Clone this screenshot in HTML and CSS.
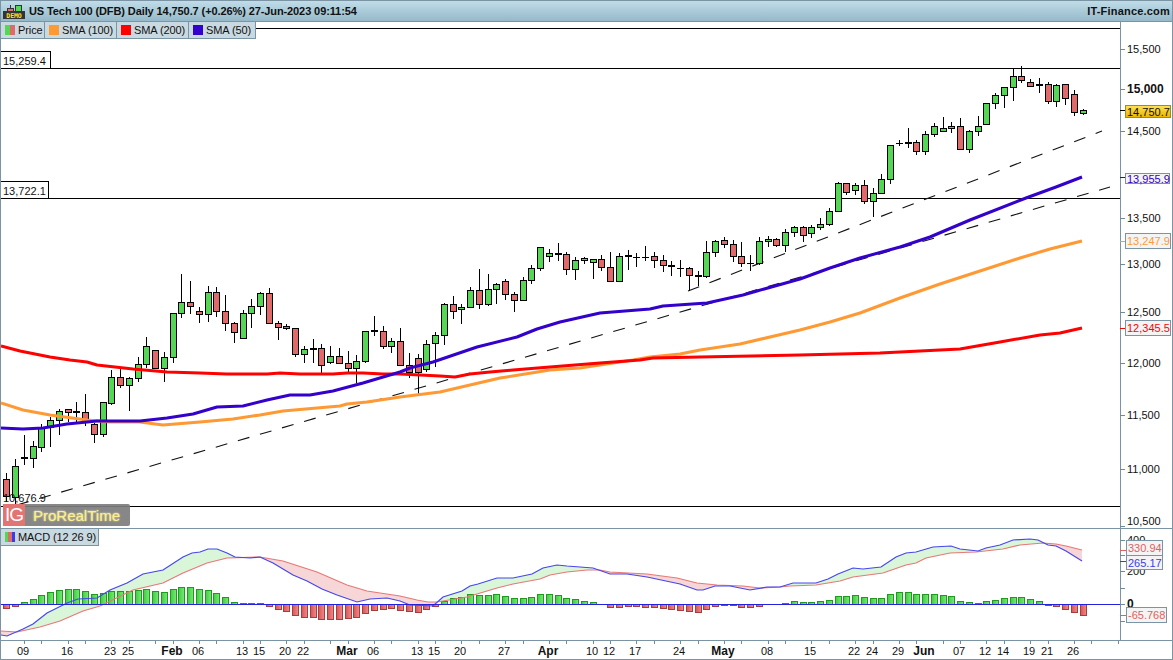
FILE: index.html
```html
<!DOCTYPE html>
<html lang="en">
<head>
  <meta charset="UTF-8">
  <title>US Tech 100 (DFB) Daily</title>
  <link rel="stylesheet" href="styles.css">
</head>
<body>
  <div class="frame">

    <!-- title bar -->
    <header class="topbar">
      <div class="title">
        <svg class="demo-icon" width="24" height="16" viewBox="0 0 24 16">
          <line x1="7.5" y1="2" x2="7.5" y2="9" stroke="#333"/>
          <rect x="4.5" y="5.5" width="6" height="3" fill="#e06a6a" stroke="#333"/>
          <rect x="12.5" y="2.5" width="6" height="6" fill="#55d655" stroke="#333"/>
          <rect x="0" y="8" width="22" height="8" fill="#333"/>
          <text class="demo-text" x="11" y="15" text-anchor="middle">DEMO</text>
        </svg>
        <span>US Tech 100 (DFB) Daily 14,750.7 (+0.26%) 27-Jun-2023 09:11:54</span>
      </div>
      <div class="brand">IT-Finance.com</div>
    </header>

    <!-- main price chart -->
    <section class="price-pane">
      <svg id="priceChart" width="1171" height="506" viewBox="1 22 1171 506"></svg>
      <div class="legend">
        <div class="tab tab-price"><i class="swatch swatch-price"></i>Price</div>
        <div class="tab tab-sma"><i class="swatch swatch-orange"></i>SMA (100)</div>
        <div class="tab tab-sma"><i class="swatch swatch-red"></i>SMA (200)</div>
        <div class="tab tab-sma50"><i class="swatch swatch-blue"></i>SMA (50)</div>
      </div>
      <div class="level level-high">15,259.4</div>
      <div class="level level-mid">13,722.1</div>
      <div class="level-low">10,676.9</div>
      <div class="logo">
        <div class="logo-ig">IG</div>
        <div class="logo-name">ProRealTime</div>
      </div>
    </section>

    <!-- MACD -->
    <section class="macd-pane">
      <svg id="macdChart" width="1171" height="111" viewBox="1 529 1171 111"></svg>
      <div class="legend">
        <div class="tab tab-macd"><i class="swatch swatch-macd"></i>MACD (12 26 9)</div>
      </div>
    </section>

    <div class="date-axis">
      <svg id="dateAxis" width="1171" height="18" viewBox="1 641 1171 18"></svg>
    </div>
  </div>

  <script src="chart.js"></script>
</body>
</html>
```

FILE: styles.css
```css
* {
  box-sizing: border-box;
}

body {
  margin: 0;
  background: #fff;
  font-family: "Liberation Sans", Arial, sans-serif;
  font-size: 11px;
  color: #111;
  overflow: hidden;
}

svg {
  display: block;
}

.frame {
  width: 1173px;
  height: 660px;
  border: 1px solid #7b94a3;
  display: flex;
  flex-direction: column;
}

/* title bar */
.topbar {
  height: 21px;
  flex: none;
  display: flex;
  justify-content: space-between;
  align-items: center;
  padding: 0 2px 0 2px;
  background: linear-gradient(to bottom, #c0dce8, #95b9ca);
  border-bottom: 1px solid #7b94a3;
  font-size: 11px;
  font-weight: bold;
  color: #111;
}

.title {
  display: flex;
  align-items: center;
  gap: 2px;
  letter-spacing: -0.1px;
}

.brand {
  letter-spacing: 0.2px;
}

.demo-icon {
  margin-top: -1px;
}

.demo-text {
  font-family: "DejaVu Sans Mono", monospace;
  font-size: 6.5px;
  font-weight: bold;
  fill: #ffe020;
}

/* panes */
.price-pane {
  position: relative;
  height: 507px;
  flex: none;
  border-bottom: 1px solid #7b94a3;
}

.macd-pane {
  position: relative;
  height: 112px;
  flex: none;
  border-bottom: 1px solid #7b94a3;
}

.date-axis {
  flex: 1;
}

/* svg text */
.axis-text {
  font-family: "Liberation Sans", Arial, sans-serif;
  font-size: 11px;
}

.axis-bold {
  font-family: "Liberation Sans", Arial, sans-serif;
  font-size: 12px;
  font-weight: bold;
}

/* legend tabs */
.legend {
  position: absolute;
  top: 0;
  left: 0;
  display: flex;
}

.tab {
  height: 17px;
  display: flex;
  align-items: center;
  gap: 3px;
  padding-left: 4px;
  background: #c9d9e1;
  border-right: 1px solid #7b94a3;
  border-bottom: 1px solid #7b94a3;
  letter-spacing: -0.1px;
  white-space: nowrap;
}

.tab-price {
  width: 44px;
}

.tab-sma {
  width: 72px;
}

.tab-sma50 {
  width: 67px;
}

.tab-macd {
  width: 98px;
}

.swatch {
  display: block;
  flex: none;
  width: 10px;
  height: 10px;
}

.swatch-price {
  background: linear-gradient(to right, #55d655 50%, #e06a6a 50%);
}

.swatch-orange {
  background: #ff9933;
}

.swatch-red {
  background: #ff0000;
}

.swatch-blue {
  background: #3300cc;
}

.swatch-macd {
  background: linear-gradient(to right, #55d655 33%, #e06a6a 33%, #e06a6a 66%, #3b3bee 66%);
}

/* horizontal level tags */
.level {
  position: absolute;
  left: 0;
  height: 18px;
  padding: 2px 0 0 2px;
  background: #fff;
  border: 1px solid #000;
  border-left: none;
  line-height: 14px;
}

.level-high {
  top: 29px;
  width: 50px;
}

.level-mid {
  top: 159px;
  width: 48px;
}

.level-low {
  position: absolute;
  top: 469px;
  left: 2px;
  line-height: 14px;
}

/* broker logo */
.logo {
  position: absolute;
  top: 482px;
  left: 2px;
  width: 127px;
  height: 22px;
  display: flex;
  align-items: center;
  background: rgba(125, 125, 125, 0.92);
  border-radius: 2px;
}

.logo-ig {
  width: 22px;
  height: 22px;
  background: #e27474;
  color: #fff;
  font-size: 19px;
  line-height: 22px;
  text-align: center;
  letter-spacing: -1px;
}

.logo-name {
  margin-left: 8px;
  color: #fdf08c;
  font-size: 15px;
  text-shadow: 0 0 2px #fff5b0;
}
```

FILE: chart.js
```js
// all y values below are screen pixels, the svg viewBoxes use page coordinates
var NS = 'http://www.w3.org/2000/svg';
var AXIS_X = 1120;

function add(parent, tag, attrs, txt) {
  var el = document.createElementNS(NS, tag);
  for (var k in attrs) el.setAttribute(k, attrs[k]);
  if (txt) el.textContent = txt;
  parent.appendChild(el);
  return el;
}

function candleX(i) {
  return Math.round(6.3 + i * 8.75);
}

function toPoints(list) {
  return list.map(function (p) { return p[0] + ',' + p[1]; }).join(' ');
}

// colour, body top, body bottom, wick top, wick bottom
var candles = [
  ['r',479,496,473,502], ['g',466,497,459,508], ['k',458,459,435,465], ['g',446,458,441,468],
  ['g',427,447,424,452], ['g',420,427,417,447], ['g',411,420,409,435], ['r',409,412,409,422],
  ['k',412,412,402,423], ['r',412,421,394,426], ['r',424,434,423,443], ['g',402,434,402,437],
  ['g',377,403,370,405], ['r',377,385,369,388], ['g',378,385,377,411], ['g',364,378,357,382],
  ['g',346,364,337,368], ['r',350,368,350,369], ['g',357,368,352,382], ['g',313,357,313,363],
  ['g',302,313,274,318], ['r',302,306,281,314], ['r',311,314,307,323], ['g',292,314,286,322],
  ['r',292,311,287,317], ['r',311,323,295,331], ['r',323,332,322,343], ['g',313,338,310,338],
  ['g',306,313,299,328], ['g',293,306,292,315], ['r',293,323,288,324], ['r',323,327,321,340],
  ['r',326,328,324,330], ['r',328,354,328,357], ['g',349,354,346,363], ['k',349,349,339,363],
  ['r',348,365,344,373], ['g',356,362,346,364], ['r',356,363,348,364], ['r',363,368,351,372],
  ['g',361,368,355,383], ['g',331,361,331,363], ['k',331,331,316,336], ['r',331,346,326,349],
  ['g',341,346,338,353], ['r',341,365,328,366], ['r',365,372,353,378], ['r',358,372,354,396],
  ['g',344,369,340,372], ['g',335,343,332,367], ['g',304,335,303,345], ['r',304,311,296,319],
  ['g',307,309,304,324], ['g',290,307,287,308], ['r',290,304,269,309], ['g',289,304,274,306],
  ['g',284,289,283,304], ['r',281,294,279,300], ['r',294,300,292,312], ['g',280,300,277,300],
  ['g',268,280,265,284], ['g',247,268,247,271], ['g',253,256,249,262], ['k',254,254,243,261],
  ['r',254,269,252,275], ['g',260,269,257,280], ['g',258,260,257,264], ['g',259,262,259,279],
  ['r',259,267,255,271], ['r',267,281,252,281], ['g',256,281,253,282], ['k',256,256,250,270],
  ['c',257,257,253,267], ['c',257,257,246,261], ['r',256,260,252,268], ['r',260,265,255,272],
  ['k',266,266,261,276], ['c',268,268,260,277], ['r',268,275,267,291], ['k',276,276,271,286],
  ['g',252,276,241,278], ['g',241,252,240,257], ['r',240,244,237,248], ['r',244,256,240,262],
  ['r',256,263,242,267], ['c',263,263,255,271], ['g',241,263,237,265], ['g',239,241,236,247],
  ['r',239,245,238,247], ['g',232,245,229,252], ['g',227,232,226,237], ['r',227,235,226,242],
  ['g',227,233,225,238], ['g',224,227,218,230], ['g',211,224,208,226], ['g',183,211,182,212],
  ['r',183,192,183,195], ['g',185,190,183,195], ['r',185,201,180,204], ['g',193,201,188,217],
  ['g',179,193,174,193], ['g',145,179,145,184], ['c',143,143,140,146], ['k',143,143,128,148],
  ['r',142,151,140,155], ['g',134,151,131,155], ['g',126,134,123,137], ['g',128,131,117,132],
  ['g',126,128,122,133], ['r',126,149,118,149], ['g',131,149,130,153], ['g',126,131,116,136],
  ['g',103,124,103,125], ['g',95,103,93,109], ['g',87,95,87,108], ['g',76,87,68,101],
  ['r',76,80,66,83], ['r',82,86,79,86], ['k',85,85,78,93], ['r',84,101,82,104],
  ['g',85,101,84,107], ['r',84,98,84,105], ['r',94,112,90,116], ['g',110,113,109,115]
];

var sma200 = [[1,346],[20,351],[50,357],[70,360],[87,362],[97,365],[133,369],[167,372],[200,373],
  [227,374],[267,374],[280,373],[300,374],[333,374],[347,373],[363,373],[383,374],[400,374],
  [440,376],[455,377],[470,374],[490,372],[513,370],[550,367],[600,363],[640,360],[653,358],
  [700,357],[800,355],[840,354],[880,353],[920,351],[960,349],[1000,342],[1040,335],[1060,333],[1082,328]];

var sma100 = [[1,403],[23,410],[50,415],[87,420],[110,422],[140,422],[163,425],[200,422],[233,419],
  [260,415],[283,411],[317,408],[340,406],[347,404],[367,402],[400,397],[440,392],[470,385],
  [500,378],[550,370],[580,368],[633,360],[650,357],[680,354],[700,350],[740,344],[800,330],
  [830,322],[860,313],[900,298],[940,284],[980,271],[1020,258],[1050,249],[1082,241]];

var sma50 = [[1,428],[23,429],[43,428],[67,424],[97,421],[140,421],[167,418],[193,414],[217,407],
  [243,406],[267,400],[290,395],[310,395],[333,391],[363,383],[400,372],[410,368],[433,362],
  [477,347],[517,337],[537,329],[560,322],[600,313],[650,309],[663,306],[707,303],[743,295],
  [757,291],[800,279],[830,268],[860,258],[900,247],[930,237],[970,220],[1026,198],[1056,187],[1082,177]];

var macdLine = [[1,635],[7,636],[23,629],[33,624],[47,613],[67,603],[78,599],[97,598],[110,590],
  [127,583],[143,574],[163,570],[183,557],[192,553],[200,552],[208,549],[217,549],[227,553],
  [235,557],[250,558],[260,557],[273,563],[293,575],[307,581],[322,589],[337,595],[357,602],
  [370,599],[387,598],[400,601],[410,605],[433,606],[443,597],[462,591],[470,586],[478,584],
  [497,578],[513,578],[532,574],[543,568],[557,565],[567,566],[593,568],[610,574],[627,574],
  [647,577],[680,584],[697,590],[703,590],[715,586],[730,586],[750,590],[767,587],[780,587],
  [793,583],[816,583],[828,579],[838,574],[853,568],[863,569],[881,567],[896,557],[906,553],
  [916,552],[933,547],[951,546],[960,549],[978,551],[986,548],[1000,545],[1013,540],[1030,539],
  [1038,540],[1048,545],[1056,546],[1066,551],[1082,561]];

var signalLine = [[1,631],[17,632],[40,627],[60,621],[83,611],[100,606],[133,590],[163,583],[183,573],
  [207,563],[227,558],[260,557],[283,561],[317,572],[347,585],[367,591],[400,596],[417,600],
  [428,602],[437,602],[467,597],[497,588],[513,584],[540,579],[550,575],[567,572],[587,570],
  [600,570],[610,572],[647,574],[677,578],[697,583],[717,585],[743,586],[760,588],[780,587],
  [790,586],[816,585],[840,581],[853,577],[883,573],[906,565],[916,563],[926,558],[950,553],
  [976,552],[1003,549],[1020,545],[1043,543],[1056,544],[1066,546],[1082,550]];

// histogram bar end for every candle, 604 is the zero line
var hist = [608,606,602,599,595,592,590,589,589,591,594,593,591,591,591,590,589,591,592,589,
  587,587,589,590,593,597,602,603,603,603,606,609,611,615,617,617,619,619,619,618,
  617,613,610,609,608,610,611,612,609,606,601,598,597,594,595,595,594,596,598,598,
  597,594,594,595,598,599,601,602,604,607,607,606,606,607,607,608,609,610,611,612,
  609,606,605,605,607,607,606,604,604,603,601,602,602,601,600,596,596,595,597,598,
  598,594,592,592,594,594,594,595,596,601,602,603,601,600,598,597,597,599,601,605,
  606,609,612,615];

// right hand axis: y of tick, label, bold
var priceTicks = [[49,'15,500'],[89,'15,000',true],[131,'14,500'],[218,'13,500'],[264,'13,000'],
  [312,'12,500'],[363,'12,000'],[415,'11,500'],[469,'11,000'],[526,'10,500']];

var macdTicks = [[540,'400'],[555],[571,'200'],[588],[604,'0',true],[621]];

var dates = [[2,'09'],[7,'16'],[12,'23'],[14,'25'],[19,'Feb',true],[22,'06'],[27,'13'],[29,'15'],
  [32,'20'],[34,'22'],[39,'Mar',true],[42,'06'],[47,'13'],[49,'15'],[52,'20'],[57,'27'],
  [62,'Apr',true],[67,'10'],[69,'12'],[72,'17'],[77,'24'],[82,'May',true],[87,'08'],[92,'15'],
  [97,'22'],[99,'24'],[102,'29'],[105,'Jun',true],[109,'07'],[112,'12'],[114,'14'],[117,'19'],
  [119,'21'],[122,'26']];

function drawCandle(svg, c, i) {
  var x = candleX(i) + 0.5;
  add(svg, 'line', { x1: x, x2: x, y1: c[3], y2: c[4], stroke: '#000', 'shape-rendering': 'crispEdges' });
  if (c[0] == 'k') {
    add(svg, 'rect', { x: x - 3.5, y: c[1] - 1, width: 7, height: 2, fill: '#000', 'shape-rendering': 'crispEdges' });
  } else if (c[0] == 'c') {
    add(svg, 'rect', { x: x - 3.5, y: c[1], width: 7, height: 1, fill: '#000', 'shape-rendering': 'crispEdges' });
  } else {
    add(svg, 'rect', {
      x: x - 3, y: c[1] + 0.5, width: 6, height: c[2] - c[1],
      fill: c[0] == 'g' ? '#55d655' : '#e06a6a', stroke: '#000', 'shape-rendering': 'crispEdges'
    });
  }
}

function hLine(svg, y, x1, x2, colour) {
  add(svg, 'line', { x1: x1, x2: x2, y1: y + 0.5, y2: y + 0.5, stroke: colour, 'shape-rendering': 'crispEdges' });
}

function valueTag(svg, x, y, w, h, label, colour, tickY) {
  hLine(svg, tickY, AXIS_X, x, colour);
  add(svg, 'rect', { x: x + 0.5, y: y + 0.5, width: w, height: h, fill: '#f4f4f4', stroke: '#7b94a3', 'shape-rendering': 'crispEdges' });
  add(svg, 'text', { x: x + 2, y: y + h / 2 + 4.5, fill: colour, 'class': 'axis-text' }, label);
}

function axisLabels(svg, ticks) {
  ticks.forEach(function (t) {
    hLine(svg, t[0], AXIS_X, AXIS_X + 5, '#6f8a99');
    if (!t[1]) return;
    var y = t[0] + 4;
    if (t[1] == '10,500') y = 525;
    add(svg, 'text', { x: AXIS_X + 7, y: y, fill: '#111', 'class': t[2] ? 'axis-bold' : 'axis-text' }, t[1]);
  });
}

function drawPrice() {
  var svg = document.getElementById('priceChart');
  [28, 68, 198, 506].forEach(function (y) { hLine(svg, y, 0, AXIS_X, '#000'); });

  var dash = { stroke: '#111', 'stroke-width': 1.1, 'stroke-dasharray': '12 11', fill: 'none' };
  add(svg, 'line', Object.assign({ x1: 688, y1: 291, x2: 1102, y2: 131 }, dash));
  add(svg, 'line', Object.assign({ x1: 17, y1: 505, x2: 1110, y2: 187 }, dash));

  candles.forEach(function (c, i) { drawCandle(svg, c, i); });

  [[sma100, '#ff9933'], [sma200, '#ff0000'], [sma50, '#3300cc']].forEach(function (s) {
    add(svg, 'polyline', { points: toPoints(s[0]), fill: 'none', stroke: s[1], 'stroke-width': 3, 'stroke-linejoin': 'round' });
  });

  add(svg, 'line', { x1: AXIS_X + 0.5, x2: AXIS_X + 0.5, y1: 22, y2: 528, stroke: '#7b94a3', 'shape-rendering': 'crispEdges' });
  axisLabels(svg, priceTicks);

  // current price tag
  hLine(svg, 110, AXIS_X, 1125, '#000');
  var defs = add(svg, 'defs', {});
  var grad = add(defs, 'linearGradient', { id: 'gold', x1: 0, y1: 0, x2: 0, y2: 1 });
  add(grad, 'stop', { offset: '0', 'stop-color': '#ffe352' });
  add(grad, 'stop', { offset: '1', 'stop-color': '#e9b400' });
  add(svg, 'rect', { x: 1125.5, y: 105.5, width: 45, height: 12, fill: 'url(#gold)', stroke: '#a58a20', 'shape-rendering': 'crispEdges' });
  add(svg, 'text', { x: 1127, y: 115.5, fill: '#111', 'class': 'axis-text' }, '14,750.7');

  valueTag(svg, 1125, 173, 44, 10, '13,955.9', '#3300cc', 177);
  valueTag(svg, 1125, 233, 45, 15, '13,247.9', '#ff9933', 241);
  valueTag(svg, 1125, 320, 45, 15, '12,345.5', '#ff0000', 328);
}

function interp(line, x) {
  for (var i = 1; i < line.length; i++) {
    if (x <= line[i][0]) {
      var a = line[i - 1], b = line[i];
      return a[1] + (b[1] - a[1]) * (x - a[0]) / (b[0] - a[0]);
    }
  }
  return line[line.length - 1][1];
}

function drawMacd() {
  var svg = document.getElementById('macdChart');
  var defs = add(svg, 'defs', {});
  var up = add(defs, 'linearGradient', { id: 'barUp', x1: 0, y1: 0, x2: 1, y2: 0 });
  add(up, 'stop', { offset: '0', 'stop-color': '#3fce3f' });
  add(up, 'stop', { offset: '1', 'stop-color': '#7ae87a' });
  var down = add(defs, 'linearGradient', { id: 'barDown', x1: 0, y1: 0, x2: 1, y2: 0 });
  add(down, 'stop', { offset: '0', 'stop-color': '#d95555' });
  add(down, 'stop', { offset: '1', 'stop-color': '#f08a8a' });

  // shaded area between the two lines, one pixel column at a time
  for (var x = 1; x < 1082; x++) {
    var m1 = interp(macdLine, x), s1 = interp(signalLine, x);
    var m2 = interp(macdLine, x + 1), s2 = interp(signalLine, x + 1);
    add(svg, 'polygon', {
      points: toPoints([[x, m1], [x + 1, m2], [x + 1, s2], [x, s1]]),
      fill: m1 + m2 < s1 + s2 ? '#d9f6d9' : '#f6d6d6', stroke: 'none', 'shape-rendering': 'crispEdges'
    });
  }

  hist.forEach(function (y, i) {
    if (y == 604) return;
    var cx = candleX(i) + 0.5;
    var green = y < 604;
    add(svg, 'rect', {
      x: cx - 3, y: (green ? y : 604) + 0.5, width: 6, height: Math.abs(y - 604),
      fill: green ? 'url(#barUp)' : 'url(#barDown)', stroke: green ? '#1f9a1f' : '#a83c3c',
      'shape-rendering': 'crispEdges'
    });
  });

  add(svg, 'polyline', { points: toPoints(signalLine), fill: 'none', stroke: '#e87878', 'stroke-width': 1.2 });
  add(svg, 'polyline', { points: toPoints(macdLine), fill: 'none', stroke: '#4646ee', 'stroke-width': 1.2 });
  hLine(svg, 604, 0, AXIS_X, '#2222dd');

  add(svg, 'line', { x1: AXIS_X + 0.5, x2: AXIS_X + 0.5, y1: 529, y2: 640, stroke: '#7b94a3', 'shape-rendering': 'crispEdges' });
  axisLabels(svg, macdTicks);

  valueTag(svg, 1126, 540, 36, 15, '330.94', '#e06060', 550);
  valueTag(svg, 1126, 555, 36, 14, '265.17', '#3a3aee', 561);
  valueTag(svg, 1126, 607, 40, 15, '-65.768', '#e06060', 615);
}

function drawDates() {
  var svg = document.getElementById('dateAxis');
  for (var i = 2; i <= 127; i++) {
    if (i % 5 == 2 || i % 5 == 4) {
      var x = candleX(i) + 0.5;
      add(svg, 'line', { x1: x, x2: x, y1: 641, y2: 644, stroke: '#6f8a99', 'shape-rendering': 'crispEdges' });
    }
  }
  dates.forEach(function (d) {
    add(svg, 'text', {
      x: candleX(d[0]) - 1, y: 655, 'text-anchor': 'middle', fill: '#111',
      'class': d[2] ? 'axis-bold' : 'axis-text'
    }, d[1]);
  });
}

drawPrice();
drawMacd();
drawDates();
```
